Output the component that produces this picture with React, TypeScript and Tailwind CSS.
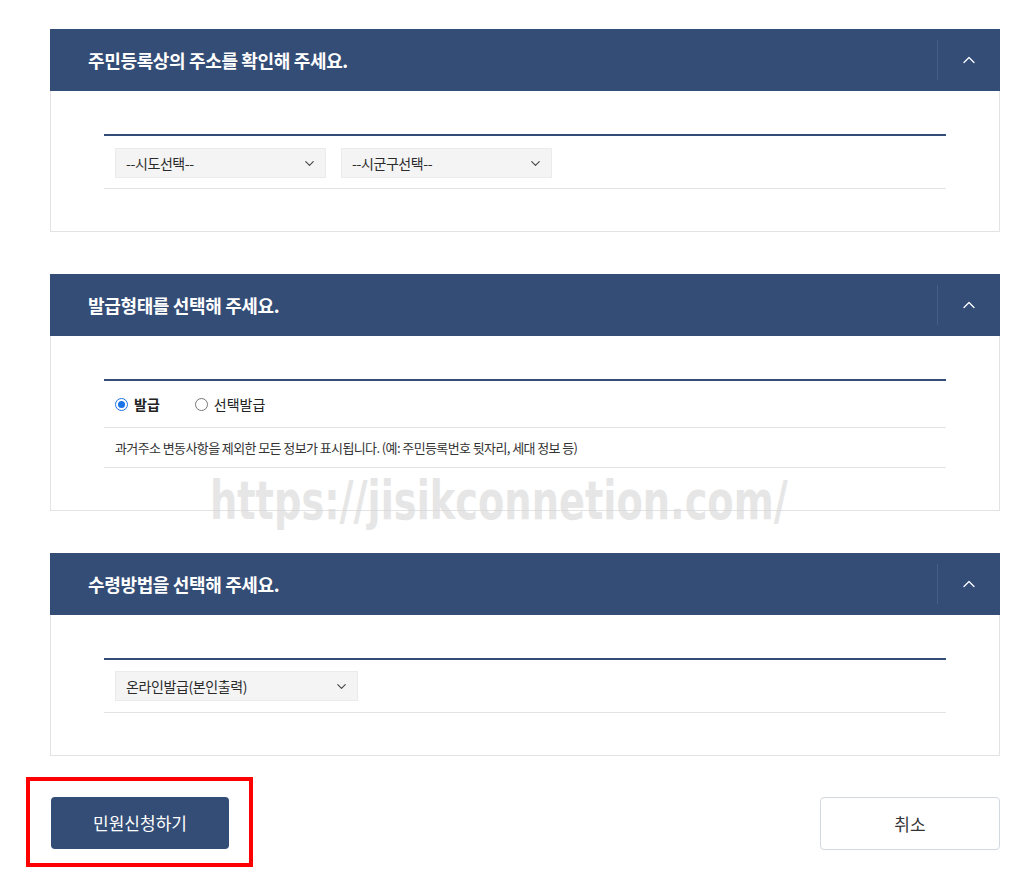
import { ChevronDown, ChevronUp } from 'lucide-react';

const font = { fontFamily: '"Noto Sans CJK KR", "Noto Sans", sans-serif' };

function Section({ title, children }: { title: string; children: React.ReactNode }) {
    return (
        <section>
            <div className="h-[62px] bg-[#334d76] flex items-center justify-between">
                <h2 className="pl-[38px] text-white text-[18px] font-bold tracking-[-0.35px]">{title}</h2>
                <div className="h-[40px] w-[63px] border-l border-[#43608a] flex items-center justify-center">
                    <ChevronUp size={20} strokeWidth={1.5} className="text-white" />
                </div>
            </div>
            <div className="border border-t-0 border-[#e3e3e3] px-[53px] pt-[43px] pb-[42px]">
                <div className="border-t-2 border-[#334d76]">{children}</div>
            </div>
        </section>
    );
}

function Select({ label, width }: { label: string; width: string }) {
    return (
        <div className={`${width} h-[30px] bg-[#f4f4f4] border border-[#ebebeb] flex items-center justify-between pl-[10px] pr-[8px] text-[14px] text-[#2b2b2b]`}>
            <span className="tracking-[-0.4px]">{label}</span>
            <ChevronDown size={15} strokeWidth={1.8} className="text-[#444]" />
        </div>
    );
}

export default function App() {
    return (
        <div className="relative bg-white min-h-[887px] pt-[29px] pl-[50px] pr-[24px]" style={font}>
            <div className="flex flex-col gap-[42px]">
                <Section title="주민등록상의 주소를 확인해 주세요.">
                    <div className="flex gap-[15px] pl-[11px] pt-[12px] pb-[10px] border-b border-[#e3e3e3]">
                        <Select label="--시도선택--" width="w-[211px]" />
                        <Select label="--시군구선택--" width="w-[211px]" />
                    </div>
                </Section>

                <Section title="발급형태를 선택해 주세요.">
                    <div className="h-[47px] flex items-center pl-[11px] border-b border-[#e3e3e3] text-[14px] text-[#222]">
                        <label className="flex items-center gap-[6px]">
                            <span className="w-[13px] h-[13px] rounded-full border border-[#1a73e8] flex items-center justify-center">
                                <span className="w-[7px] h-[7px] rounded-full bg-[#1a73e8]" />
                            </span>
                            <span className="font-bold">발급</span>
                        </label>
                        <label className="flex items-center gap-[6px] ml-[35px]">
                            <span className="w-[13px] h-[13px] rounded-full border border-[#767676]" />
                            <span>선택발급</span>
                        </label>
                    </div>
                    <div className="h-[40px] flex items-center pl-[11px] border-b border-[#e3e3e3] text-[13px] text-[#333] tracking-[-0.6px]">
                        과거주소 변동사항을 제외한 모든 정보가 표시됩니다. (예: 주민등록번호 뒷자리, 세대 정보 등)
                    </div>
                </Section>

                <Section title="수령방법을 선택해 주세요.">
                    <div className="pl-[11px] pt-[11px] pb-[11px] border-b border-[#e3e3e3]">
                        <Select label="온라인발급(본인출력)" width="w-[243px]" />
                    </div>
                </Section>
            </div>

            <div className="flex justify-between items-start mt-[21px]">
                <div className="border-[4px] border-[#ff0000] pl-[21px] pr-[20px] pt-[16px] pb-[14px] -ml-[24px]">
                    <button className="block w-[178px] h-[52px] rounded-[4px] bg-[#334d76] text-white text-[17px]">
                        민원신청하기
                    </button>
                </div>
                <button className="mt-[20px] w-[180px] h-[53px] rounded-[4px] border border-[#d4d8e0] bg-white text-[#333] text-[17px]">
                    취소
                </button>
            </div>

            <div
                className="absolute left-[210px] top-[460px] text-[54px] font-bold text-[#d6d6d6] opacity-60 origin-left scale-x-[0.71] select-none pointer-events-none whitespace-nowrap"
                style={{ fontFamily: '"DejaVu Sans", sans-serif' }}
            >
                https://jisikconnetion.com/
            </div>
        </div>
    );
}
